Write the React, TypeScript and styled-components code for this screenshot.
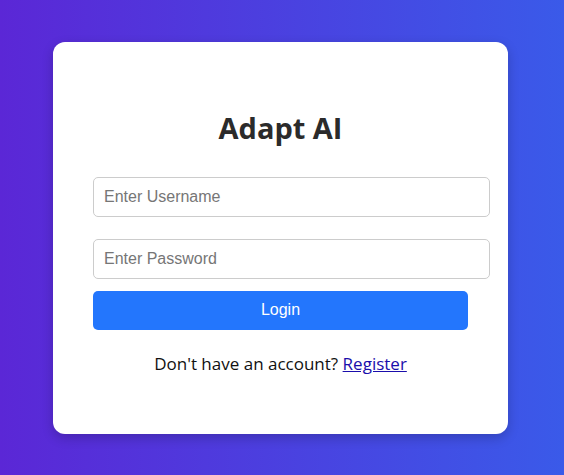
import styled, { createGlobalStyle } from "styled-components";

const GlobalStyle = createGlobalStyle`
  html, body {
    margin: 0;
    padding: 0;
  }
  body {
    font-family: "Open Sans", "Noto Sans", sans-serif;
  }
`;

const Page = styled.div`
  box-sizing: border-box;
  width: 100%;
  height: 475px;
  padding-right: 3px;
  display: flex;
  align-items: center;
  justify-content: center;
  background: linear-gradient(90deg, #5b27d6 0%, #3a5ae9 100%);
`;

const Card = styled.div`
  width: 375px;
  padding: 40px;
  background: #ffffff;
  border-radius: 12px;
  box-shadow: 0 4px 12px rgba(0, 0, 0, 0.2);
  display: flex;
  flex-direction: column;
  align-items: flex-start;
`;

const Title = styled.h2`
  align-self: stretch;
  margin: 29px 0 32px;
  text-align: center;
  color: #2b2b2b;
  font-size: 29px;
  font-weight: 700;
  line-height: 34px;
`;

const Input = styled.input`
  width: 375px;
  padding: 10px;
  margin: 0 0 22px;
  font-family: "Liberation Sans", Arial, sans-serif;
  font-size: 16px;
  line-height: 18px;
  border: 1px solid #cccccc;
  border-radius: 5px;
  color: #333;
  outline: none;

  &::placeholder {
    color: #767676;
  }

  &:last-of-type {
    margin-bottom: 12px;
  }
`;

const Button = styled.button`
  width: 375px;
  height: 39px;
  border: none;
  border-radius: 5px;
  background: #2376fd;
  color: #ffffff;
  font-family: "Liberation Sans", Arial, sans-serif;
  font-size: 16px;
  cursor: pointer;
`;

const Footer = styled.p`
  align-self: stretch;
  margin: 22px 0 18px;
  text-align: center;
  font-size: 17px;
  line-height: 24px;
  color: #111;
`;

const Link = styled.a`
  color: #1a0dab;
  text-decoration: underline;
`;

export default function App() {
  return (
    <>
      <GlobalStyle />
      <Page>
        <Card>
          <Title>Adapt AI</Title>
          <Input type="text" placeholder="Enter Username" />
          <Input type="password" placeholder="Enter Password" />
          <Button>Login</Button>
          <Footer>
            Don't have an account? <Link href="#">Register</Link>
          </Footer>
        </Card>
      </Page>
    </>
  );
}
